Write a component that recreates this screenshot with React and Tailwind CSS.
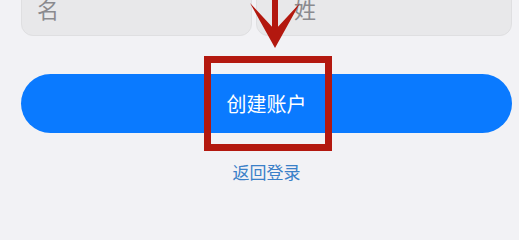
import React from "react";

const FONT = { fontFamily: '"Noto Sans CJK SC", "Noto Sans", sans-serif' };

const App = () => {
  return (
    <div
      className="relative w-[519px] h-[220px] overflow-hidden bg-[#f2f2f5]"
      style={FONT}
    >
      <div className="fixed inset-0 -z-10 bg-[#f2f2f5]" />
      <div className="pl-[21px] pr-[7px]">
        {/* NAME FIELDS */}
        <div className="flex gap-[4px] -mt-[20px]">
          <div className="w-[231px] h-[56px] rounded-[12px] bg-[#e8e8ea] border border-[#dfdfe1] flex items-center px-[15px]">
            <span className="text-[22px] text-[#8a8a8e]">名</span>
          </div>
          <div className="flex-1 h-[56px] rounded-[12px] bg-[#e8e8ea] border border-[#dfdfe1] flex items-center px-[37px]">
            <span className="text-[22px] text-[#8a8a8e]">姓</span>
          </div>
        </div>

        {/* CREATE BUTTON */}
        <button className="mt-[38px] w-full h-[59px] rounded-full bg-[#0a7aff] text-white text-[20px] flex items-center justify-center">
          创建账户
        </button>

        <p className="mt-[27px] text-center text-[17px] leading-[24px] text-[#3a80c8]">
          返回登录
        </p>
      </div>

      {/* ANNOTATION */}
      <div className="absolute left-[204px] top-[56px] w-[128px] h-[95px] border-[7px] border-[#b3180f]" />
      <svg
        className="absolute left-[245px] top-0"
        width="60"
        height="52"
        viewBox="0 0 60 52"
      >
        <line x1="30" y1="0" x2="30" y2="32" stroke="#b3180f" strokeWidth="6" />
        <path d="M5 3 L30 48 L55 3 L30 30 Z" fill="#b3180f" />
      </svg>
    </div>
  );
};

export default App;
